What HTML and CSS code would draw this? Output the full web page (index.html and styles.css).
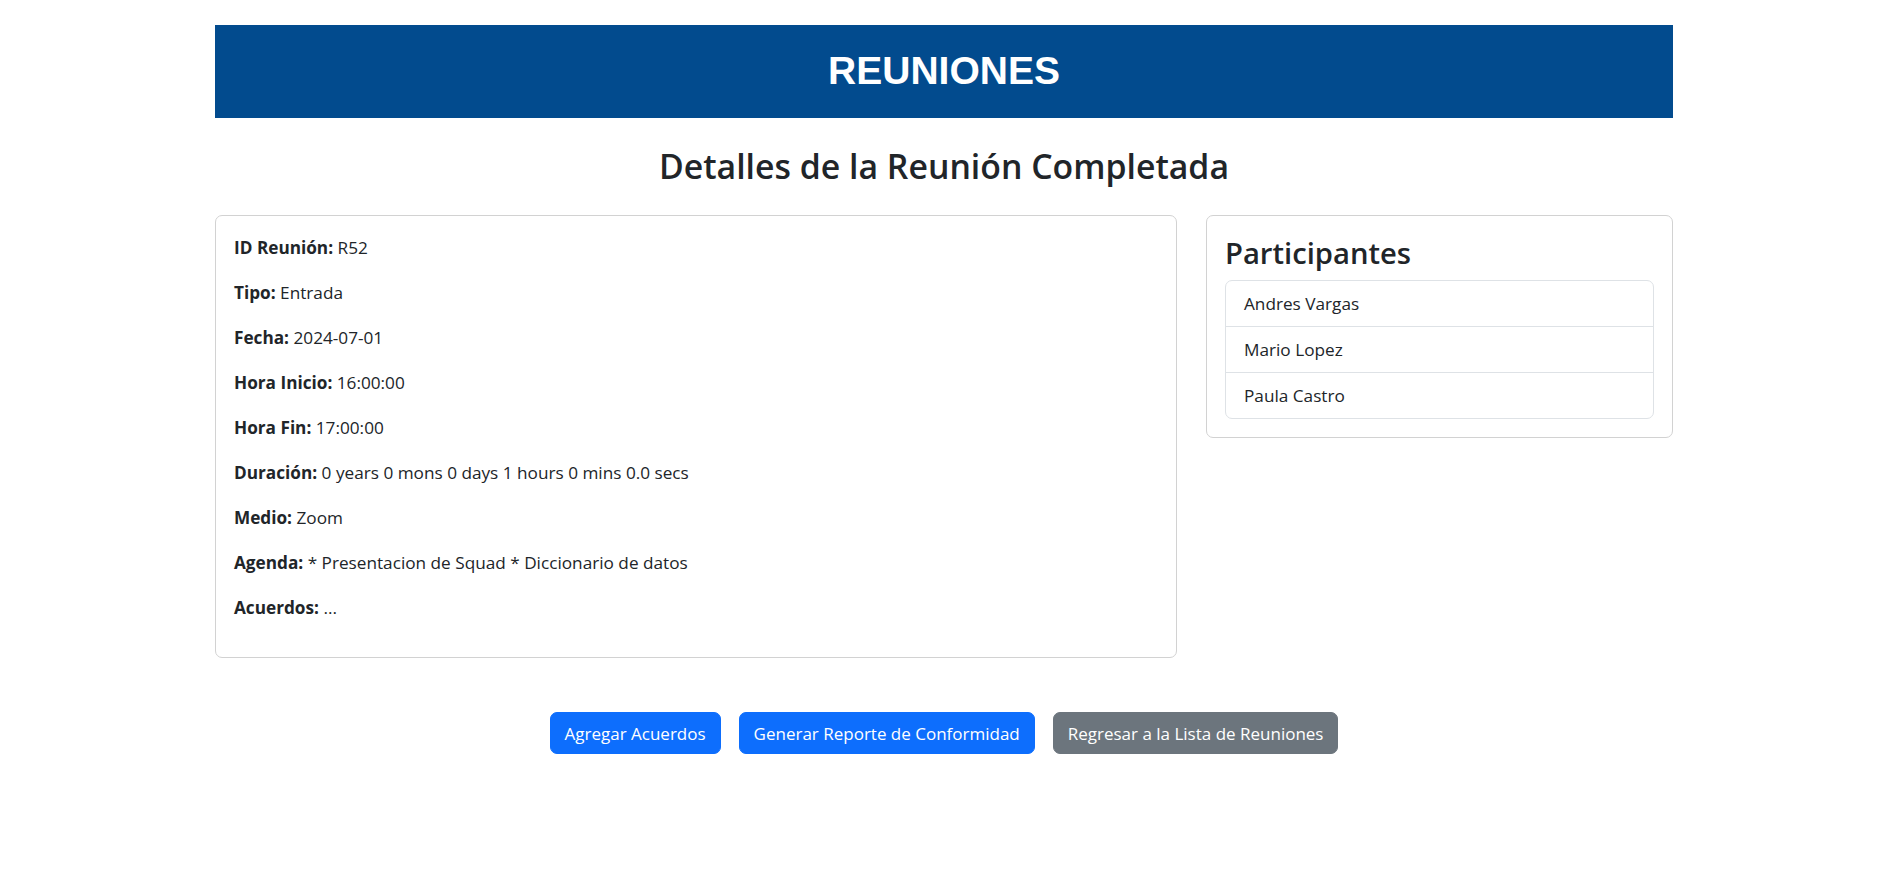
FILE: index.html
```html
<!DOCTYPE html>
<html lang="es">
<head>
<meta charset="utf-8">
<title>Reuniones</title>
<link rel="stylesheet" href="styles.css">
</head>
<body>
<div class="page">
  <header class="banner">
    <h1 class="banner-title">REUNIONES</h1>
  </header>
  <h2 class="page-title">Detalles de la Reunión Completada</h2>
  <div class="row">
    <section class="card details">
      <p><strong>ID Reunión:</strong> R52</p>
      <p><strong>Tipo:</strong> Entrada</p>
      <p><strong>Fecha:</strong> 2024-07-01</p>
      <p><strong>Hora Inicio:</strong> 16:00:00</p>
      <p><strong>Hora Fin:</strong> 17:00:00</p>
      <p><strong>Duración:</strong> 0 years 0 mons 0 days 1 hours 0 mins 0.0 secs</p>
      <p><strong>Medio:</strong> Zoom</p>
      <p><strong>Agenda:</strong> * Presentacion de Squad * Diccionario de datos</p>
      <p><strong>Acuerdos:</strong> ...</p>
    </section>
    <section class="card participants">
      <h3 class="card-title">Participantes</h3>
      <ul class="list-group">
        <li class="list-item">Andres Vargas</li>
        <li class="list-item">Mario Lopez</li>
        <li class="list-item">Paula Castro</li>
      </ul>
    </section>
  </div>
  <div class="actions">
    <button class="btn btn-primary">Agregar Acuerdos</button>
    <button class="btn btn-primary">Generar Reporte de Conformidad</button>
    <button class="btn btn-secondary">Regresar a la Lista de Reuniones</button>
  </div>
</div>
</body>
</html>
```
FILE: styles.css
```css
* { box-sizing: border-box; }
html, body { margin: 0; padding: 0; background: #fff; }
body {
  font-family: "Open Sans", "Noto Sans", sans-serif;
  font-size: 17.2px;
  line-height: 27px;
  color: #212529;
  padding-right: 4px;
}
.page {
  width: 1458px;
  margin: 25px auto 0;
}
.banner {
  height: 93px;
  background: #024b8e;
  display: flex;
  align-items: center;
  justify-content: center;
  padding-bottom: 2px;
}
.banner-title {
  margin: 0;
  font-family: "Liberation Sans", Arial, sans-serif;
  font-weight: 700;
  font-size: 39px;
  line-height: 45px;
  color: #fff;
}
.page-title {
  margin: 27px 0;
  text-align: center;
  font-size: 33.8px;
  font-weight: 600;
  line-height: 43px;
}
.row {
  display: grid;
  grid-template-columns: 962px 467px;
  column-gap: 29px;
  align-items: start;
}
.card {
  border: 1px solid #d2d2d2;
  border-radius: 7px;
  padding: 18px;
  background: #fff;
}
.details p {
  margin: 0 0 18px;
}
.details strong { font-weight: 700; }
.card-title {
  margin: 0 0 8px;
  font-size: 29.2px;
  font-weight: 600;
  line-height: 38px;
}
.list-group {
  list-style: none;
  margin: 0;
  padding: 0;
  border: 1px solid #dee2e6;
  border-radius: 7px;
}
.list-item {
  padding: 9px 18px;
  line-height: 27px;
}
.list-item + .list-item {
  border-top: 1px solid #dee2e6;
}
.actions {
  margin-top: 54px;
  display: flex;
  justify-content: center;
  gap: 18px;
}
.btn {
  font-family: inherit;
  font-size: 17px;
  line-height: 27px;
  padding: 6.5px 14px;
  border: 1px solid transparent;
  border-radius: 7px;
  color: #fff;
  cursor: pointer;
}
.btn-primary { background: #0d6efd; border-color: #0d6efd; }
.btn-secondary { background: #6c757d; border-color: #6c757d; }
```
